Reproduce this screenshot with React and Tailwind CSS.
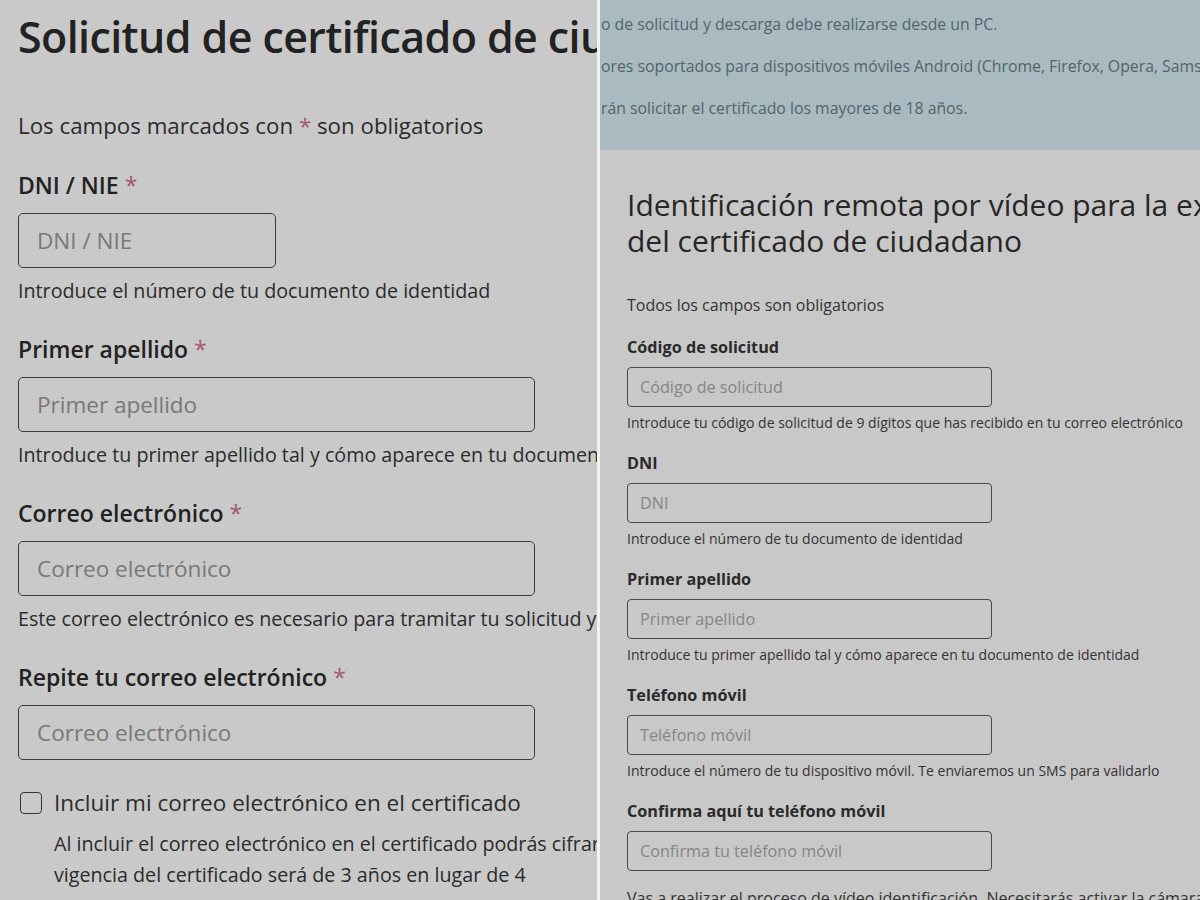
export default function App() {
  const leftFont = { fontFamily: '"Open Sans", "Noto Sans", sans-serif' };
  const Star = () => <span className="text-[#a3566a] font-normal"> *</span>;

  const LeftField = ({ label, placeholder, help, width, first }) => (
    <div className={first ? "mt-[31px]" : "mt-[30px]"}>
      <div className="text-[23px] leading-[28px] font-semibold text-[#222] whitespace-nowrap">
        {label}
        <Star />
      </div>
      <div
        className={`mt-[14px] h-[55px] ${width} border-[1.5px] border-[#3a3a3a] rounded-[5px] flex items-center pl-[18px] text-[22.5px] text-[#787878]`}
      >
        {placeholder}
      </div>
      {help && (
        <div className="mt-[9px] text-[19.7px] leading-[28px] text-[#2b2b2b] whitespace-nowrap">{help}</div>
      )}
    </div>
  );

  const RightField = ({ label, placeholder, help }) => (
    <div className="mt-[20px]">
      <div className="text-[16.2px] leading-[22px] font-bold text-[#2a2a2a] whitespace-nowrap">{label}</div>
      <div className="mt-[9px] h-[40px] w-[365px] border-[1.5px] border-[#4a4a4a] rounded-[4px] flex items-center pl-[12px] text-[16.2px] text-[#858585]">
        {placeholder}
      </div>
      {help && (
        <div className="mt-[7px] text-[14px] leading-[18px] text-[#333] whitespace-nowrap">{help}</div>
      )}
    </div>
  );

  return (
    <div className="h-[900px] w-[1200px] overflow-hidden flex bg-[#c9c9c9]" style={leftFont}>
      {/* Left panel */}
      <div className="w-[597px] h-full overflow-hidden bg-[#c9c9c9] pl-[18px] shrink-0">
        <div className="pt-[11px] text-[43px] leading-[52px] font-semibold tracking-[-0.6px] text-[#222] whitespace-nowrap">
          Solicitud de certificado de ciudadano
        </div>
        <div className="mt-[49px] text-[22.3px] leading-[28px] text-[#2b2b2b] whitespace-nowrap">
          Los campos marcados con <span className="text-[#a3566a]">*</span> son obligatorios
        </div>
        <LeftField
          first
          label="DNI / NIE"
          placeholder="DNI / NIE"
          width="w-[258px]"
          help="Introduce el número de tu documento de identidad"
        />
        <LeftField
          label="Primer apellido"
          placeholder="Primer apellido"
          width="w-[517px]"
          help="Introduce tu primer apellido tal y cómo aparece en tu documento de identidad"
        />
        <LeftField
          label="Correo electrónico"
          placeholder="Correo electrónico"
          width="w-[517px]"
          help="Este correo electrónico es necesario para tramitar tu solicitud y recibir notificaciones"
        />
        <LeftField label="Repite tu correo electrónico" placeholder="Correo electrónico" width="w-[517px]" />
        <div className="mt-[28px] flex items-center h-[30px]">
          <div className="ml-[2px] w-[22px] h-[22px] border-[1.5px] border-[#333] rounded-[4px] shrink-0" />
          <div className="ml-[12px] text-[22.5px] leading-[30px] text-[#2b2b2b] whitespace-nowrap">
            Incluir mi correo electrónico en el certificado
          </div>
        </div>
        <div className="mt-[10px] pl-[36px] text-[19.7px] leading-[31px] text-[#2b2b2b] whitespace-nowrap">
          <div>Al incluir el correo electrónico en el certificado podrás cifrar tus comunicaciones, pero la</div>
          <div>vigencia del certificado será de 3 años en lugar de 4</div>
        </div>
      </div>

      {/* Divider */}
      <div className="w-[3px] h-full bg-[#f2f2f2] shrink-0" />

      {/* Right panel */}
      <div className="flex-1 h-full overflow-hidden bg-[#c8c8c8] min-w-0">
        <div className="h-[150px] bg-[#a9bbc1] pl-[1px] pt-[13px] text-[15.8px] text-[#53636a] whitespace-nowrap">
          <div className="leading-[22px]">o de solicitud y descarga debe realizarse desde un PC.</div>
          <div className="mt-[20px] leading-[22px]">
            ores soportados para dispositivos móviles Android (Chrome, Firefox, Opera, Samsung Internet)
          </div>
          <div className="mt-[20px] leading-[22px]">rán solicitar el certificado los mayores de 18 años.</div>
        </div>
        <div className="pl-[27px]">
          <div className="pt-[37px] text-[30px] leading-[36px] font-medium text-[#262626] whitespace-nowrap">
            <div>Identificación remota por vídeo para la expedición</div>
            <div>del certificado de ciudadano</div>
          </div>
          <div className="mt-[35px] text-[16px] leading-[22px] text-[#333] whitespace-nowrap">
            Todos los campos son obligatorios
          </div>
          <RightField
            label="Código de solicitud"
            placeholder="Código de solicitud"
            help="Introduce tu código de solicitud de 9 dígitos que has recibido en tu correo electrónico"
          />
          <RightField label="DNI" placeholder="DNI" help="Introduce el número de tu documento de identidad" />
          <RightField
            label="Primer apellido"
            placeholder="Primer apellido"
            help="Introduce tu primer apellido tal y cómo aparece en tu documento de identidad"
          />
          <RightField
            label="Teléfono móvil"
            placeholder="Teléfono móvil"
            help="Introduce el número de tu dispositivo móvil. Te enviaremos un SMS para validarlo"
          />
          <RightField label="Confirma aquí tu teléfono móvil" placeholder="Confirma tu teléfono móvil" />
          <div className="mt-[16px] text-[16px] leading-[22px] text-[#333] whitespace-nowrap">
            Vas a realizar el proceso de vídeo identificación. Necesitarás activar la cámara y el micrófono
          </div>
        </div>
      </div>
    </div>
  );
}
